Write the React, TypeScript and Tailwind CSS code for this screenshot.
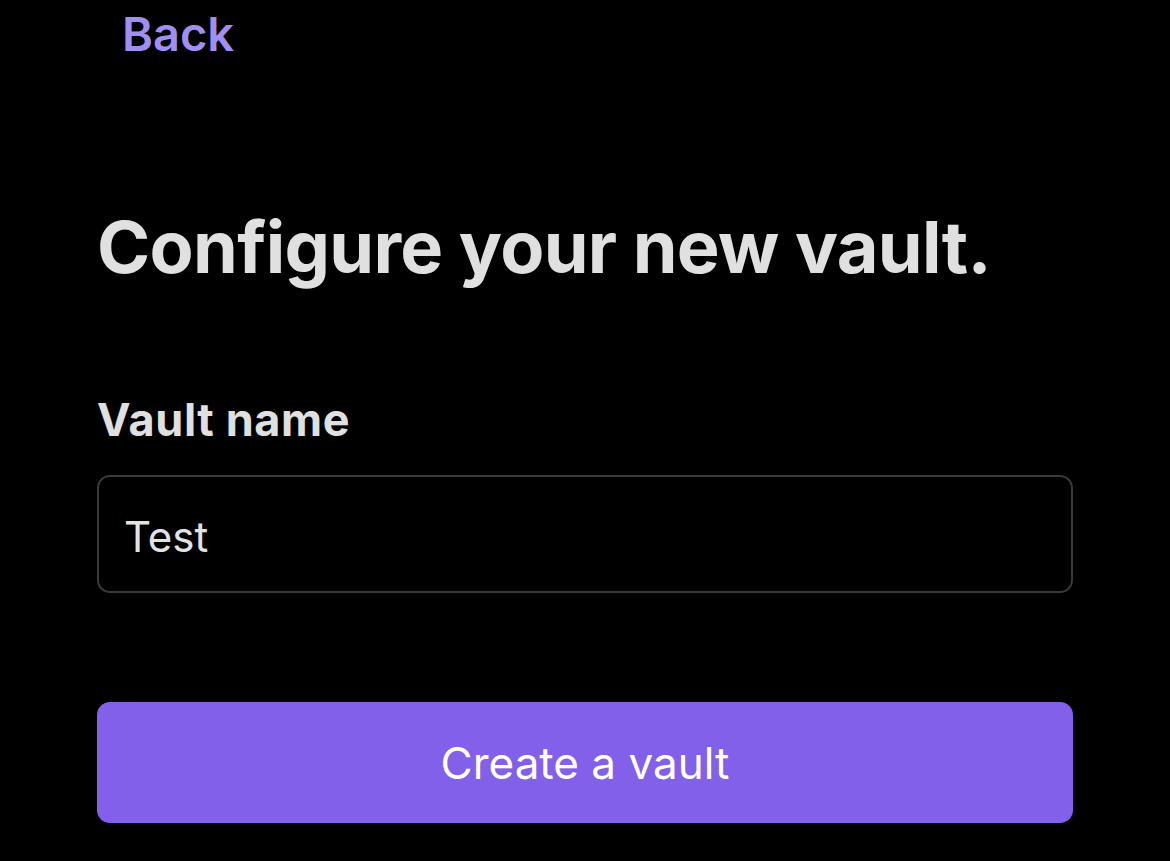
export default function App() {
    return (
        <div className="min-h-[861px] w-full bg-black font-['Inter','Noto_Sans',sans-serif] antialiased">
            <div className="flex flex-col px-[97px]">
                {/* Back link */}
                <button className="mt-[10px] ml-[25px] self-start text-[47px] font-semibold leading-none text-[#a18ef2]">
                    Back
                </button>

                <h1 className="mt-[154px] text-[72px] font-bold leading-none tracking-[-0.7px] text-[#e0e0e0]">
                    Configure your new vault.
                </h1>

                <label className="mt-[114px] text-[45px] font-bold leading-none tracking-[0.6px] text-[#e0e0e0]">
                    Vault name
                </label>

                <div className="mt-[33px] flex h-[118px] items-center rounded-[13px] border-2 border-[#3a3a3a] px-[25px] pt-[6px]">
                    <span className="text-[42px] leading-none text-[#e3e3e3]">Test</span>
                </div>

                <button className="mt-[109px] flex h-[121px] items-center justify-center rounded-[13px] bg-[#8360ea] text-[44px] leading-none text-white">
                    Create a vault
                </button>
            </div>
        </div>
    );
}
